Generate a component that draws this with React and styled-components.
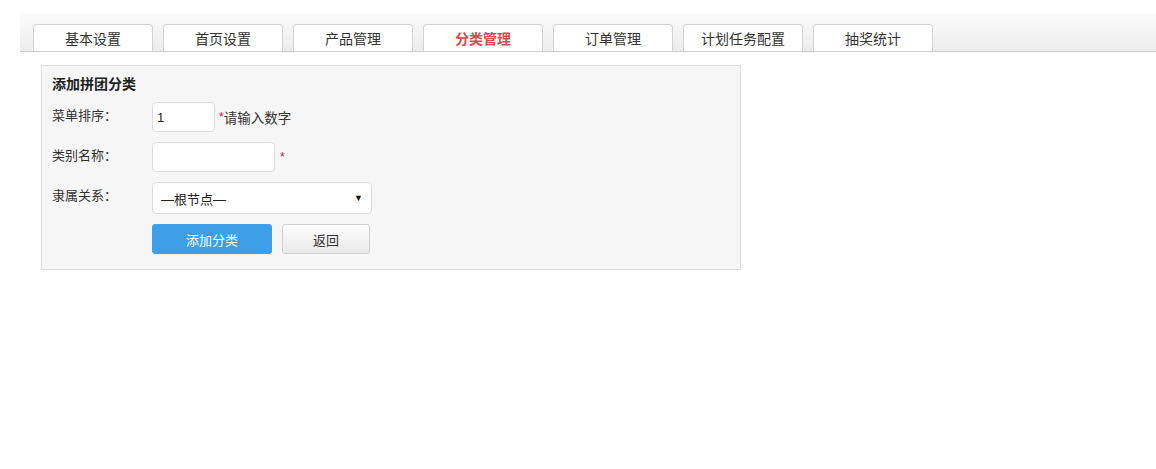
import React from 'react';
import styled, { createGlobalStyle } from 'styled-components';

const GlobalStyle = createGlobalStyle`
	html, body {
		margin: 0;
		padding: 0;
		background: #fff;
		font-family: "Liberation Sans", "Noto Sans CJK SC", sans-serif;
		font-size: 13px;
		color: #333;
	}
`;

const Page = styled.div`
	padding-top: 13px;
	width: 1156px;
	height: 469px;
	box-sizing: border-box;
`;

const TabBar = styled.div`
	margin-left: 20px;
	height: 39px;
	box-sizing: border-box;
	border-bottom: 1px solid #cfcfcf;
	background: linear-gradient(to bottom, #fbfbfb 0%, #ececec 100%);
	display: flex;
	align-items: flex-end;
	gap: 10px;
	padding-left: 13px;
`;

const Tab = styled.div`
	width: 120px;
	height: 27px;
	box-sizing: border-box;
	border: 1px solid #d3d3d3;
	border-bottom: none;
	border-radius: 4px 4px 0 0;
	background: #fff;
	display: flex;
	align-items: center;
	justify-content: center;
	font-size: 14px;
	color: ${(p) => (p.$active ? '#e0474c' : '#333')};
	font-weight: ${(p) => (p.$active ? 'bold' : 'normal')};
`;

const Panel = styled.div`
	margin: 13px 0 0 41px;
	width: 700px;
	height: 205px;
	box-sizing: border-box;
	border: 1px solid #dedede;
	background: #f6f6f6;
	padding: 8px 10px 0 10px;
`;

const Title = styled.div`
	font-size: 14px;
	font-weight: bold;
	color: #222;
	height: 20px;
	line-height: 20px;
	margin-bottom: 8px;
`;

const Row = styled.div`
	display: flex;
	align-items: center;
	margin-bottom: 10px;
`;

const Label = styled.div`
	width: 100px;
	flex: none;
	align-self: flex-start;
	line-height: 28px;
	color: #333;
`;

const Input = styled.div`
	width: ${(p) => p.$w}px;
	height: 30px;
	box-sizing: border-box;
	border: 1px solid #dcdcdc;
	border-radius: 4px;
	background: #fff;
	padding-left: 4px;
	display: flex;
	align-items: center;
	font-size: 13px;
	color: #222;
`;

const Select = styled(Input)`
	height: 32px;
	padding: 0 8px;
	justify-content: space-between;
`;

const Arrow = styled.span`
	font-size: 9px;
	color: #111;
`;

const Star = styled.span`
	color: #c0143c;
	font-size: 12px;
	margin-left: ${(p) => p.$ml || 4}px;
`;

const Hint = styled.span`
	color: #333;
	font-size: 13.5px;
`;

const Button = styled.div`
	width: ${(p) => p.$w}px;
	height: 30px;
	box-sizing: border-box;
	border-radius: 3px;
	display: flex;
	align-items: center;
	justify-content: center;
	font-size: 13px;
	margin-right: 10px;
	background: ${(p) => (p.$primary ? '#3d9fe8' : 'linear-gradient(to bottom, #fdfdfd, #e8e8e8)')};
	color: ${(p) => (p.$primary ? '#fff' : '#333')};
	border: 1px solid ${(p) => (p.$primary ? '#3d9fe8' : '#cfcfcf')};
`;

const tabs = ['基本设置', '首页设置', '产品管理', '分类管理', '订单管理', '计划任务配置', '抽奖统计'];

export default function App() {
	return (
		<Page>
			<GlobalStyle />
			<TabBar>
				{tabs.map((t) => (
					<Tab key={t} $active={t === '分类管理'}>
						{t}
					</Tab>
				))}
			</TabBar>
			<Panel>
				<Title>添加拼团分类</Title>
				<Row>
					<Label>菜单排序：</Label>
					<Input $w={63}>1</Input>
					<Star $ml={4}>*</Star>
					<Hint>请输入数字</Hint>
				</Row>
				<Row>
					<Label>类别名称：</Label>
					<Input $w={123} />
					<Star $ml={5}>*</Star>
				</Row>
				<Row>
					<Label>隶属关系：</Label>
					<Select $w={220}>
						<span>—根节点—</span>
						<Arrow>▼</Arrow>
					</Select>
				</Row>
				<Row>
					<Label />
					<Button $primary $w={120}>添加分类</Button>
					<Button $w={88}>返回</Button>
				</Row>
			</Panel>
		</Page>
	);
}
